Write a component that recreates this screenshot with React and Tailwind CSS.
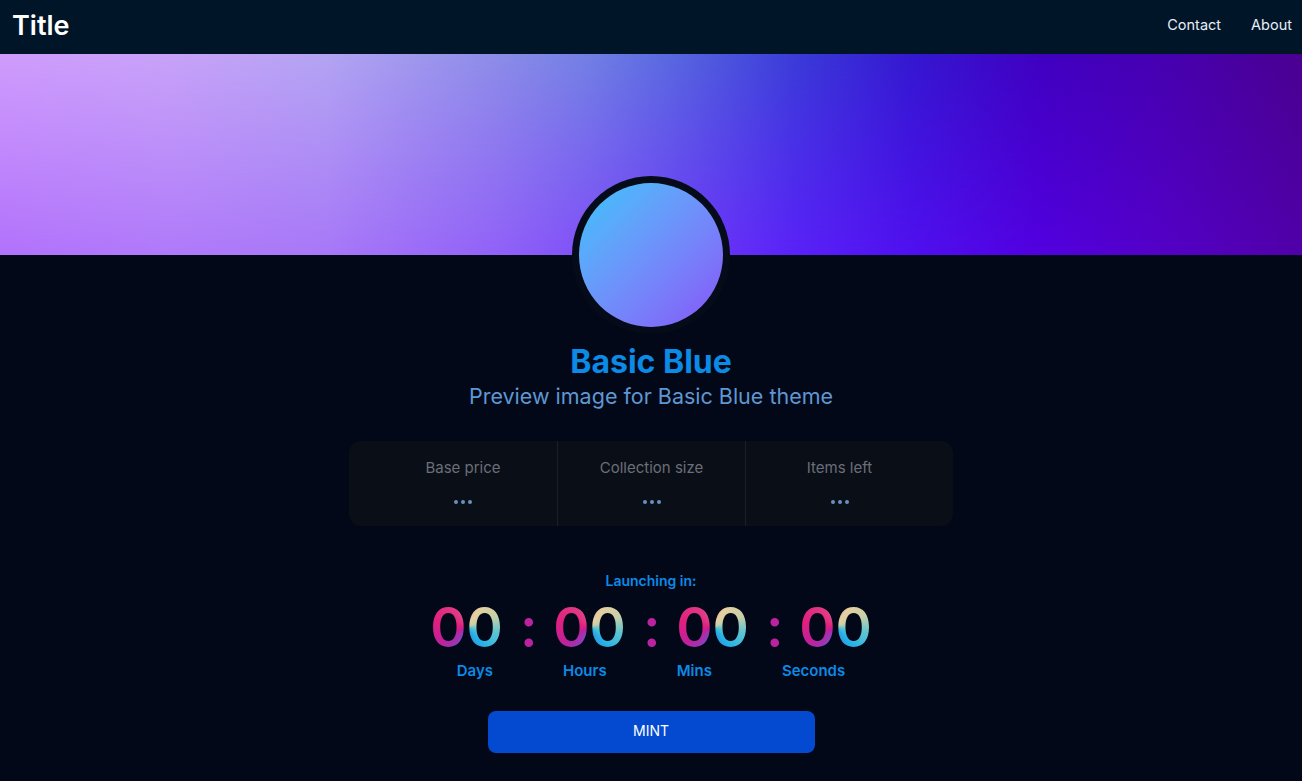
import React from 'react';

const stats = ['Base price', 'Collection size', 'Items left'];
const units = ['Days', 'Hours', 'Mins', 'Seconds'];

const Dots = () => (
  <div className="flex items-center gap-[3px]">
    <span className="w-[4px] h-[4px] rounded-full bg-[#6b8fbf]"></span>
    <span className="w-[4px] h-[4px] rounded-full bg-[#6b8fbf]"></span>
    <span className="w-[4px] h-[4px] rounded-full bg-[#6b8fbf]"></span>
  </div>
);

const App = () => {
  return (
    <div className="min-h-screen bg-[#020817] font-['Inter','Liberation_Sans',sans-serif] flex flex-col">
      {/* Top bar */}
      <header className="h-[54px] bg-[#001528] flex items-center justify-between pl-3 pr-[10px]">
        <div className="text-[27px] font-semibold text-white leading-none -mt-[4px]">Title</div>
        <nav className="flex items-center gap-[30px] text-[14.5px] text-[#e8eef6] -mt-[4px]">
          <span>Contact</span>
          <span>About</span>
        </nav>
      </header>

      {/* Banner */}
      <div className="relative h-[201px] bg-[linear-gradient(90deg,#b272fc_0%,#b07afa_13%,#a878f8_25%,#9262f8_38%,#8050f8_45%,#5a22f8_61%,#5010f0_70%,#5200e0_80%,#5400c8_89%,#5000a8_100%)]">
        <div className="absolute inset-0 bg-[linear-gradient(90deg,#cf9cfc_0%,#c7a2f8_13%,#b3a4f2_25%,#8c8ce8_38%,#7280e4_45%,#5a6ae0_51%,#3a3cd8_61%,#3418d0_70%,#4000c0_80%,#4600b0_89%,#4a0090_100%)] [mask-image:linear-gradient(to_bottom,black,transparent)]"></div>
      </div>

      <main className="flex flex-col items-center">
        {/* Avatar */}
        <div className="relative -mt-[79px] w-[158px] h-[158px] rounded-full bg-[#050b18] p-[7px]">
          <div className="w-full h-full rounded-full bg-linear-to-br from-[#2ec4fa] to-[#8452f8]"></div>
        </div>

        <h1 className="mt-2 text-[32px] leading-[40px] font-bold text-[#0b8ae6]">Basic Blue</h1>
        <p className="text-[21.5px] leading-[29px] text-[#5f97d2]">Preview image for Basic Blue theme</p>

        {/* Stats */}
        <div className="mt-[30px] h-[85px] px-5 rounded-xl bg-[#0a0e17] flex">
          {stats.map((label, i) => (
            <div
              key={label}
              className={`w-[188px] h-full flex flex-col items-center pt-[17px] ${i > 0 ? 'border-l border-[#1a1f2b]' : ''}`}
            >
              <div className="text-[15px] leading-[20px] text-[#6b6f78]">{label}</div>
              <div className="mt-[22px]">
                <Dots />
              </div>
            </div>
          ))}
        </div>

        {/* Countdown */}
        <div className="mt-[45px] text-[14px] leading-[20px] font-semibold text-[#0b8ae6]">Launching in:</div>
        <div className="mt-2 flex items-center gap-[17px] text-[55px] leading-[56px] font-semibold">
          {units.map((u, i) => (
            <React.Fragment key={u}>
              {i > 0 && <span className="w-[16px] text-center text-[#bb22a0]">:</span>}
              <span className="w-[73px] text-center bg-[conic-gradient(from_0deg,#e8a8a0_0deg,#e6cfa0_35deg,#c8d0a8_70deg,#5fc4d0_100deg,#22b0e8_140deg,#4a7fd8_175deg,#8a40c0_205deg,#c0209a_240deg,#e0207f_280deg,#e23c86_330deg,#e8a8a0_360deg)] bg-clip-text text-transparent">
                00
              </span>
            </React.Fragment>
          ))}
        </div>
        <div className="mt-[6px] flex items-center gap-[70px] text-[15px] leading-[20px] font-semibold text-[#0b8ae6]">
          {units.map((u) => (
            <span key={u}>{u}</span>
          ))}
        </div>

        <button className="mt-[30px] w-[327px] h-[42px] rounded-lg bg-[#034ad0] text-white text-[14px] leading-none pb-[2px]">
          MINT
        </button>
      </main>
    </div>
  );
};

export default App;
